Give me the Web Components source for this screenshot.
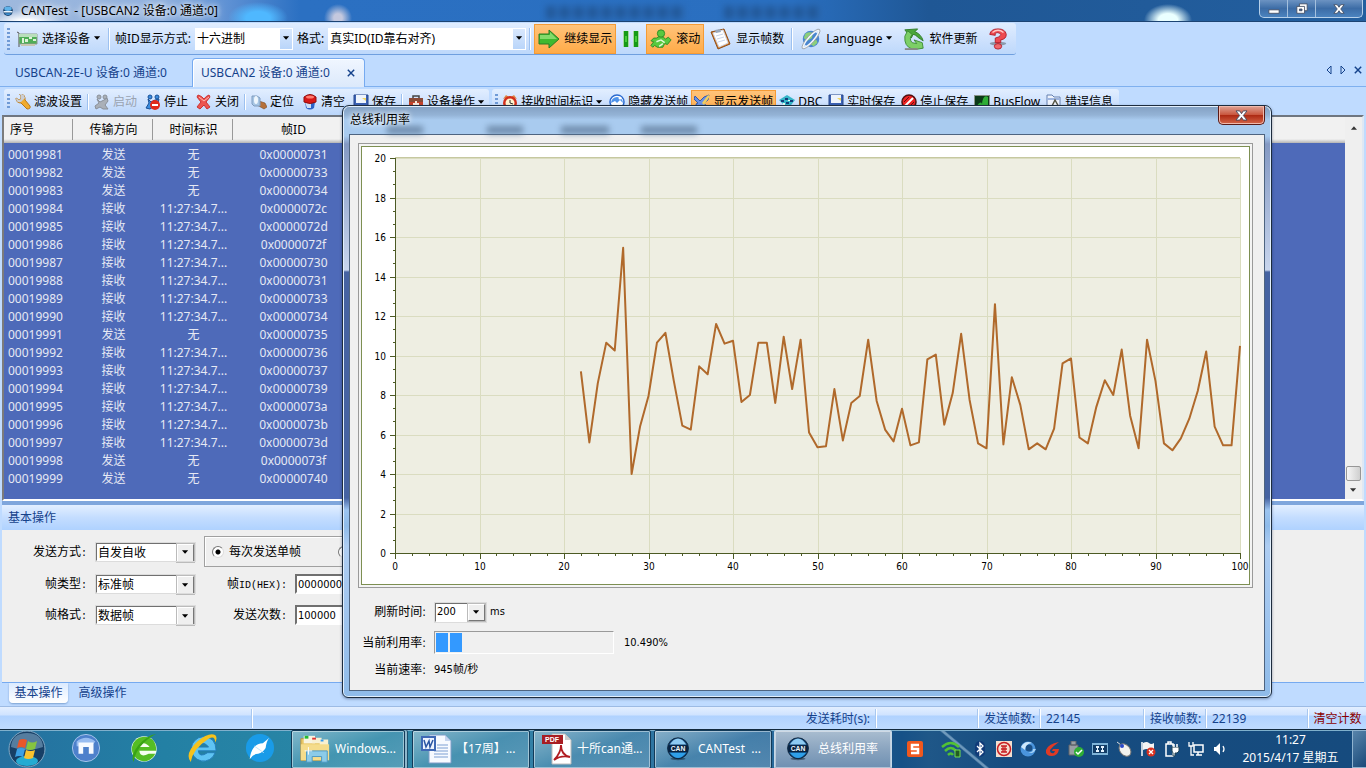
<!DOCTYPE html>
<html lang="zh-CN">
<head>
<meta charset="utf-8">
<title>CANTest</title>
<style>
html,body{margin:0;height:100%}
body{font:12px/18px "Noto Sans","Noto Sans CJK SC",sans-serif;color:#000;background:#bfdbff;overflow:hidden}
</style>
</head>
<body>
<desktop-screen></desktop-screen>
<script>
const ICONS = {
  app: ['0 0 16 16', '<circle cx="8" cy="8" r="6.500" fill="#173e68"/><ellipse cx="8" cy="5" rx="5" ry="3" fill="#5fb3ea"/><path d="M2 8h12v2H2z" fill="#e8f4ff"/><path d="M3 11h10q-5 5-10 0z" fill="#3d8fd0"/>'],
  card: ['0 0 22 18', '<path d="M1 2l2 1v14" fill="none" stroke="#555"/><path d="M3 4h18v10H3z" fill="#4fae57" stroke="#8c9a8c"/><path d="M3 4h18v3H3z" fill="#b9dfba"/><path d="M6 8h2v5H6zM9 9h3v3H9zM13 7h3v2h-3zM17 9h3v2h-3z" fill="#dff2d8"/><path d="M5 14h14v2H5z" fill="#c8c6b0"/>'],
  go: ['0 0 22 20', '<path d="M1 5h10V1l10 9-10 9v-4H1z" fill="#3fb92f" stroke="#2b7d26"/><path d="M2 6h10V3l7 7H2z" fill="#9be57f" opacity=".75"/>'],
  pause: ['0 0 18 18', '<path d="M1 1h6v16H1zM11 1h6v16h-6z" fill="#a8d8a0"/><path d="M2 1h4v16H2zM12 1h4v16h-4z" fill="#169a16"/><path d="M3 6h2v6H3zM13 6h2v6h-2z" fill="#48c83c"/>'],
  roll: ['0 0 24 22', '<g fill="#58c93f" stroke="#2c8a24"><path d="M7 10Q12 6 17 11l3-2 3 3-4 5-3-1-2 4H8l-3-2-2 2-2-2 3-4-3-1 3-3z"/><circle cx="12" cy="5" r="4"/></g><path d="M7 14l5-2 4 3M10 19l4-3" fill="none" stroke="#e6fadd" stroke-width="1.500"/>'],
  note: ['0 0 22 22', '<path d="M1 4L14 1l6 15-12 5z" fill="#d5843a" stroke="#8e4d17"/><path d="M3 5l10-3 5 13-9 4z" fill="#fff" stroke="#cfd8e8"/><path d="M5 2l5-1 1 3-5 1z" fill="#9aa9bd"/><path d="M6 8l7-2M7 11l7-2M8 14l7-2" stroke="#c7d4ea"/>'],
  globe: ['0 0 24 24', '<circle cx="12" cy="12" r="9" fill="#4a86cf"/><path d="M6 6q5-3 8 0l-1 5-5 3-4-3zM13 14l5-1 1 3-4 4-3-2z" fill="#8ccf7a"/><ellipse cx="12" cy="12" rx="13" ry="3" fill="none" stroke="#f2f6fa" stroke-width="2" transform="rotate(-48 12 12)"/><ellipse cx="12" cy="12" rx="14" ry="4" fill="none" stroke="#8a939d" stroke-width=".8" transform="rotate(-48 12 12)"/>'],
  update: ['0 0 22 24', '<path d="M1 2l14-1-3 3q7 3 9 10l-6-4q-2-3-5-3l-2 4z" fill="#4aa63c" stroke="#2f7c27"/><path d="M1 9l3-6 5 4q-4 5 0 9l5 1-3-4 9 3 1 6-6 1H9Q0 20 1 9z" fill="#7ccf66" stroke="#3b8a32"/><path d="M1 23h14" stroke="#888" stroke-width="2"/>'],
  help: ['0 0 20 24', '<ellipse cx="10" cy="17" rx="9" ry="2" fill="#8b9aab"/><path d="M1 7Q2 1 10 1t9 6q0 5-6 6v3H7v-5q6-1 6-4-1-2-4-2T7 8z" fill="#ee4a50" stroke="#b11c28"/><ellipse cx="10" cy="20" rx="4" ry="3" fill="#f0696d" stroke="#b11c28"/><path d="M4 5q6-5 12 0" stroke="#ffc6c4" stroke-width="1.500" fill="none"/>'],
  wrench: ['0 0 16 16', '<path d="M1 4l3 2 2-1V2L4 0q5-1 6 4v2l5 6q1 3-3 3L6 9Q1 9 1 4z" fill="#f0ab2e" stroke="#b97717"/><path d="M1 4l3 2 2-1V2L4 0q5-1 6 4l-4 4Q1 9 1 4z" fill="#c9ced6"/>'],
  run: ['0 0 16 16', '<g fill="#aab0b8" stroke="#8a9099"><circle cx="5" cy="3" r="2"/><circle cx="11" cy="3" r="2"/><path d="M3 5l3 3 4-2 3-2 1 3-3 4 3 4H9l-3-2-4 2-1-3 4-3z"/></g>'],
  stop: ['0 0 16 16', '<g fill="#3a8de0" stroke="#174f96"><circle cx="5" cy="3" r="2"/><circle cx="12" cy="3" r="2"/><path d="M3 5l3 3 4-2 4-1-1 4-8 6-4-1 3-5z"/></g><circle cx="10" cy="11" r="5" fill="#e02a1a"/><path d="M7 10h6v2H7z" fill="#fff"/>'],
  close: ['0 0 16 16', '<path d="M2 1q4 1 6 4 2-3 5-4l1 2-4 5 4 5-3 2-3-4-4 4-3-2 4-5-4-5z" fill="#ec5450" stroke="#c33"/><path d="M3 3l5 4 5-4" stroke="#ffb7b0" fill="none"/>'],
  locate: ['0 0 16 16', '<path d="M8 7l6 2 2 4-3 2-7-4z" fill="#b5703a" stroke="#7c4a22" stroke-width=".6"/><path d="M1 2h5l3 2v8H3L1 10z" fill="#a8c6e4" stroke="#7f9cbf"/><ellipse cx="5" cy="6" rx="2" ry="4" fill="#eef6fd"/>'],
  clear: ['0 0 16 16', '<path d="M3 8h10l-1 6q-4 3-8 0z" fill="#2c62c8"/><path d="M3 8h6v6H5z" fill="#cfe0f8"/><path d="M2 3q6-5 12 0v5q-6 3-12 0z" fill="#d81818" stroke="#8f1010"/><ellipse cx="8" cy="3" rx="4" ry="1.500" fill="#ff7c70"/>'],
  save: ['0 0 16 16', '<path d="M1 1h14v14H3l-2-2z" fill="#3c62b4" stroke="#27468c"/><path d="M3 1h10v8H3z" fill="#eef4fc"/><path d="M4 11h8v4H4z" fill="#b8c6de"/><path d="M9 4h4v3z" fill="#f3d763"/>'],
  tools: ['0 0 16 16', '<path d="M5 4V2h6v2" fill="none" stroke="#444" stroke-width="1.500"/><path d="M1 4h14v11H1z" fill="#c4422a"/><path d="M1 4h14v4H1z" fill="#8a4a36"/><path d="M7 7h2v2h2v2H9v2H7v-2H5V9h2z" fill="#f8e6da"/>'],
  clock: ['0 0 16 16', '<path d="M1 5l3-4 3 2zM15 5l-3-4-3 2z" fill="#d84"/><circle cx="8" cy="9" r="7" fill="#d3301c"/><circle cx="8" cy="9" r="4.500" fill="#fff3cf"/><path d="M8 6v3l3 1" stroke="#333" fill="none"/>'],
  hide: ['0 0 16 16', '<circle cx="8" cy="8" r="7" fill="#fff" stroke="#2a6ad0" stroke-width="1.500"/><path d="M2 9a6 6 0 1 1 12 0l-3-3-3 3-2-2z" fill="#4f93ea"/><circle cx="11" cy="4" r="1.500" fill="#fff"/>'],
  show: ['0 0 16 16', '<path d="M1 2l5 5 4-4 5-2-1 5-4 3 4 5-2 1-5-4-4 3-1-4 2-1-4-4z" fill="#6a92e4" stroke="#3458ac"/><path d="M8 9l6-8 2 1-6 9z" fill="#f0cf62"/>'],
  dbc: ['0 0 16 16', '<path d="M0 6l8-5 8 5-7 9z" fill="#35b5c8"/><path d="M2 6h3v2H2zM6 4h3v2H6zM7 8h3v2H7zM11 6h3v2h-3zM8 12h3v1H8z" fill="#133c78"/><path d="M4 9h2v2H4zM9 6h2v1H9z" fill="#eaffef"/>'],
  nosave: ['0 0 16 16', '<circle cx="8" cy="8" r="7" fill="#e22" stroke="#501010" stroke-width="1.500"/><path d="M4 12l8-8" stroke="#fff" stroke-width="2"/><path d="M3 8l5-5M8 13l5-5" stroke="#611"/>'],
  flow: ['0 0 16 16', '<path d="M0 1h16v14H0z" fill="#8a948a"/><path d="M1 2h14v12H1z" fill="#0c3a18"/><path d="M2 13q5-7 6-3 1-10 6-7v10z" fill="#2fae35"/>'],
  error: ['0 0 16 16', '<path d="M1 1h5l2 2h6v12H1z" fill="#eef3fc" stroke="#6580b0"/><path d="M1 4h13v2H1z" fill="#9fb6e0"/><path d="M5 14l4-8 5 9M6 12h7" stroke="#554" stroke-width="1.500" fill="none"/>'],
  maxthon: ['0 0 32 32', '<circle cx="16" cy="16" r="14.500" fill="#4d80cb" stroke="#a9c6ec"/><path d="M6 9q10-8 20 0-4 7-20 5z" fill="#97bcf0"/><path d="M8 10h16v12h-5v-7h-6v7H8z" fill="#f6faff"/>'],
  green: ['0 0 32 32', '<circle cx="16" cy="17" r="13.500" fill="#f5fff0"/><path d="M16 4a13 13 0 1 0 12 18h-7q-9 5-10-3h18Q29 4 16 4zm-5 11q4-8 11 0z" fill="#55bd24"/><path d="M5 31Q1 24 10 13 20 2 29 1q-5 2-13 9Q6 20 5 31z" fill="#39a315"/>'],
  ie: ['0 0 32 32', '<path d="M17 4a13 13 0 1 0 13 17h-8q-9 6-10-2h19Q31 4 17 4zm-5 11q5-8 11 0z" fill="#5fc4f3" stroke="#247db8"/><path d="M4 31Q-3 22 11 9 23-1 30 2q3 3 0 8 0-8-7-4Q6 17 4 31z" fill="#f6c21c"/>'],
  bird: ['0 0 32 32', '<circle cx="16" cy="16" r="15" fill="#199be8"/><path d="M26 5q-3 3-4 11-3 5-8 6-5 0-9 6 1-8 4-12 4-5 10-5z" fill="#fff"/><path d="M10 14l10 7" stroke="#bfe4fb"/>'],
  folder: ['0 0 34 32', '<path d="M2 5h9l2 3h17v20H2z" fill="#e8c766" stroke="#ba9440"/><path d="M5 2h12v8H5z" fill="#f8f4e0"/><path d="M6 2h4v3H6z" fill="#2b3"/><path d="M14 4h10v6H14zM22 6h9v6h-9z" fill="#f8f0d0"/><path d="M14 4h4v2h-4z" fill="#d33"/><path d="M23 6h3v2h-3z" fill="#39e"/><path d="M2 11h30v17H2z" fill="#f5dc8b"/><path d="M8 30V18h22v12h-6v-6H14v6z" fill="#8ccbe8" stroke="#4a96c2"/><path d="M10 14v8M6 18h8" stroke="#fff"/>'],
  word: ['0 0 32 32', '<path d="M9 2h16l6 6v22H9z" fill="#f7faff" stroke="#7f9cc8"/><path d="M25 2v6h6z" fill="#c5d5ef"/><path d="M17 12h11M17 15h11M14 18h14M14 21h14M14 24h14" stroke="#7d9fd2"/><path d="M1 3h15v15H1z" fill="#3f69b5"/><path d="M3 5h11v11H3z" fill="#eef4ff"/><path d="M4 7l2 7 3-6 1 6 3-7" stroke="#2c57a4" stroke-width="1.500" fill="none"/>'],
  pdf: ['0 0 32 32', '<path d="M11 1h13l6 6v24H11z" fill="#fff" stroke="#bbb"/><path d="M24 1v6h6z" fill="#ccc"/><path d="M1 2h21v9H1z" fill="#a71d23"/><text x="4" y="9" font-family="Liberation Sans" font-size="7" font-weight="700" fill="#fff">PDF</text><path d="M13 27q7-7 7-15 0 10 9 12-9-2-16 3z" fill="none" stroke="#b01c20" stroke-width="1.800"/>'],
  can: ['0 0 32 32', '<ellipse cx="16" cy="29" rx="10" ry="2" fill="#123" opacity=".5"/><circle cx="16" cy="15" r="14" fill="#0d3e6e" stroke="#06192e"/><path d="M5 10Q10 2 16 2t11 8z" fill="#8ecbf3"/><path d="M5 21q11 14 22 0z" fill="#2f9fe8"/><path d="M3 11h26v9H3z" fill="#07213e"/><text x="16" y="19" text-anchor="middle" font-family="Liberation Sans" font-size="9" font-weight="700" fill="#eef8ff">CAN</text>'],
  sogou: ['0 0 16 16', '<rect width="16" height="16" rx="2" fill="#f0581e"/><path d="M12 4H5v4h6v4H4" stroke="#fff" stroke-width="2.500" fill="none"/>'],
  wifi: ['0 0 20 18', '<g fill="none" stroke="#52c234" stroke-width="2.500"><path d="M1 7q9-8 17 0M4 11q6-6 11 0M7 15q3-3 5 0"/></g><path d="M14 10h5v7h-5z" fill="#225c22" stroke="#72e04e"/>'],
  bt: ['0 0 16 16', '<rect x="3" width="10" height="16" rx="5" fill="#103a78"/><path d="M5 5l6 6-3 3V2l3 3-6 6" fill="none" stroke="#fff" stroke-width="1.300"/>'],
  icbc: ['0 0 16 16', '<path d="M0 0h16v16H0z" fill="#f3dfd0"/><circle cx="8" cy="8" r="6.500" fill="none" stroke="#c81e22" stroke-width="1.500"/><path d="M5 5h6M5 11h6M7 5v6M9 5v6M5 8h6" stroke="#c81e22" stroke-width="1.300"/>'],
  swirl: ['0 0 16 16', '<circle cx="8" cy="8" r="7.500" fill="#4a94dc"/><circle cx="9" cy="7" r="3.500" fill="#1a5088"/><path d="M1 6q4-7 11-4Q5 3 5 9z" fill="#cfe8fb"/><path d="M16 8q-3 6-8 3 5 1 5-3z" fill="#a8d4f6"/>'],
  gred: ['0 0 16 16', '<path d="M15 1Q9 5 6 9q0 4 4 3l1-2H8l1-2h6q-1 7-7 7-7 0-6-6 2-6 13-8z" fill="#e03a24"/>'],
  usb: ['0 0 16 16', '<path d="M3 0h5v4H3zM1 4h9v10H1z" fill="#9a9fa4" stroke="#5e6368"/><circle cx="11" cy="11" r="5" fill="#2fae35"/><path d="M8 11l2 2 4-4" stroke="#fff" stroke-width="1.500" fill="none"/>'],
  film: ['0 0 16 16', '<path d="M0 2h16v12H0z" fill="#7fb4d8"/><path d="M1 4h14v8H1z" fill="#123c66"/><path d="M4 5h3v2H6v2h1v2H4V9h1V7H4zM9 5h3v2h-1v2h1v2H9V9h1V7H9z" fill="#e6f4ff"/>'],
  mouse: ['0 0 16 16', '<path d="M1 1l4 3" stroke="#ddd"/><ellipse cx="9" cy="9" rx="5" ry="7" fill="#f2f2ee" stroke="#777" transform="rotate(-40 9 9)"/><circle cx="6" cy="5" r="2" fill="#2747c8"/>'],
  flag: ['0 0 16 16', '<path d="M2 1v14" stroke="#fff" stroke-width="1.500"/><path d="M3 2q4-2 6 0t5 0v7q-3 2-5 0t-6 0z" fill="#f4f4f4"/><circle cx="11" cy="11" r="4.500" fill="#d9301f"/><path d="M9 9l4 4M13 9l-4 4" stroke="#fff" stroke-width="1.300"/>'],
  plug: ['0 0 16 16', '<path d="M2 3h7v12H2zM4 1h3v2H4z" fill="none" stroke="#fff" stroke-width="1.500"/><path d="M8 6h7v4l-2 2h-2v3H9v-3L8 10z" fill="#fff" stroke="#245"/><path d="M10 3v3M13 3v3" stroke="#fff" stroke-width="1.500"/>'],
  net: ['0 0 16 16', '<path d="M6 4h9v7H6zM8 14h6M10 11v3" fill="none" stroke="#fff" stroke-width="1.500"/><path d="M1 1v4h4V1M3 5v9h3" fill="none" stroke="#fff" stroke-width="1.300"/>'],
  vol: ['0 0 16 16', '<path d="M2 6h2l4-4v12l-4-4H2z" fill="#fff"/><path d="M11 5q2 3 0 6" stroke="#fff" stroke-width="1.300" fill="none"/>'],
  caret: ['0 0 8 5', '<path d="M0 0h7L3.500 4z" fill="currentColor"/>'],
  x: ['0 0 10 10', '<path d="M1 1l8 8M9 1l-8 8" stroke="currentColor" stroke-width="1.800"/>'],
  prev: ['0 0 6 10', '<path d="M5 1v8L1 5z" fill="none" stroke="currentColor"/>'],
  next: ['0 0 6 10', '<path d="M1 1v8l4-4z" fill="none" stroke="currentColor"/>'],
  winx: ['0 0 14 12', '<path d="M1 1h4l2 3 2-3h4L9 6l4 5H9L7 8l-2 3H1l4-5z" fill="#fff" stroke="#444e63"/>'],
  min: ['0 0 14 12', '<path d="M1 7h12v4H1z" fill="#fff" stroke="#444e63"/>'],
  restore: ['0 0 14 12', '<path d="M4 0h9v8h-9z" fill="#fff" stroke="#444e63"/><path d="M1 3h9v8H1z" fill="#fff" stroke="#444e63"/><path d="M4 6h3v2H4z" fill="#39659c" stroke="#444e63"/>'],
  orb: ['0 0 38 38', '<circle cx="19" cy="19" r="18" fill="#173f66" stroke="#82a8c4"/><path d="M3 17Q4 3 19 3t16 14q-16 6-32 0z" fill="#7fa6c4" opacity=".6"/><ellipse cx="19" cy="31" rx="11" ry="5" fill="#29c7ee" opacity=".8"/><path d="M11 10q4-2 8 0l-2 8q-4-2-8 0z" fill="#e8562a"/><path d="M20 11q4 3 9 0l-2 8q-5 2-9 0z" fill="#85c440"/><path d="M9 19q4-2 8 0l-2 8q-4-2-8 0z" fill="#3c9fe4"/><path d="M18 20q5 2 9 0l-2 8q-5 2-9 0z" fill="#f9c22e"/>']
};

function define(name, css, html, setup) {
  customElements.define(name, class extends HTMLElement {
    constructor() {
      super();
      const root = this.attachShadow({mode: 'open'});
      root.innerHTML = `<style>*{box-sizing:border-box}${css}</style>`;
      this.markup = html;
    }
    connectedCallback() {
      if (this.ready) return;
      this.ready = true;
      const t = document.createElement('template');
      t.innerHTML = typeof this.markup === 'function' ? this.markup(this) : this.markup;
      this.shadowRoot.append(t.content.cloneNode(true));
      if (setup) setup(this, this.shadowRoot);
    }
  });
}

define('can-icon',
  ':host{display:inline-block;flex:none;width:16px;height:16px}svg{display:block;width:100%;height:100%}',
  el => { const [box, art] = ICONS[el.getAttribute('name')]; return `<svg viewBox="${box}" aria-hidden="true">${art}</svg>`; });

define('tool-grip',
  ':host{display:block;flex:none;width:3px;height:22px;background:repeating-linear-gradient(#6f9ad6 0 2px,transparent 2px 4px)}', '');

define('tool-sep',
  ':host{display:block;flex:none;width:2px;height:22px;margin:0 1px;border-left:1px solid #9dc1f0;border-right:1px solid #fff;box-sizing:border-box}', '');

define('tool-button', `
  :host{display:block;flex:none}
  button{display:flex;align-items:center;gap:var(--tool-gap,3px);height:100%;margin:0;padding:0 var(--tool-pad,3px);border:1px solid transparent;background:none;font:inherit;color:inherit;white-space:nowrap}
  :host([hot]) button{background:linear-gradient(#ffc37a,#ffab48);border-color:#f59b35}
  :host([disabled]) button{color:#9aa3b0}
  can-icon{width:var(--icon,16px);height:var(--icon,16px)}
  .caret{width:7px;height:5px}`,
  el => `<button type="button" ${el.hasAttribute('disabled') ? 'disabled' : ''} aria-label="${el.getAttribute('icon')}">
    <can-icon name="${el.getAttribute('icon')}"></can-icon><slot></slot>${el.hasAttribute('menu') ? '<can-icon class="caret" name="caret"></can-icon>' : ''}</button>`);

define('combo-box', `
  :host{display:block;flex:none;height:21px}
  div{display:grid;height:100%;background:#fff}
  select{grid-area:1/1;width:100%;height:100%;margin:0;border:0;padding:0 2px;appearance:none;background:none;font:inherit;color:#000;min-width:0;border-radius:0}
  span{grid-area:1/1;justify-self:end;pointer-events:none;display:grid;place-items:center;width:14px;background:linear-gradient(#d9e8fd,#b9d5fa);border:1px solid #fff}
  can-icon{width:7px;height:5px}
  :host([classic]) select{padding:0 1px}
  :host([classic]) div{border:2px solid;border-color:#707070 #fff #fff #707070;outline:1px solid #dcdcdc;outline-offset:-1px}
  :host([classic]) span{width:17px;background:#efefef;border:1px solid;border-color:#fff #777 #777 #fff;box-shadow:0 0 0 1px #bbb}`,
  el => `<div><select aria-label="${el.getAttribute('label')}"><option>${el.getAttribute('value')}</option></select><span><can-icon name="caret"></can-icon></span></div>`);

define('title-bar', `
  :host{display:flex;align-items:center;position:relative;height:22px;flex:none;overflow:hidden;border-bottom:1px solid #1c4473;
    background:radial-gradient(ellipse 24px 16px at 1168px 20px,#eaffff 40%,transparent),radial-gradient(ellipse 30px 16px at 258px 18px,#4fb8ff 40%,transparent),radial-gradient(ellipse 14px 14px at 338px 18px,#c4c8de 30%,transparent),radial-gradient(ellipse 40px 12px at 26px 22px,#fff 20%,transparent),linear-gradient(90deg,#9fb9dd 0,#8fb0de 12%,#5b8fd3 17%,#2b70c2 22%,#2a6fc0 58%,#1f5795 68%,#235f9f 100%)}
  h1{display:flex;align-items:center;gap:7px;margin:0 0 0 2px;font:inherit;font-size:12px;white-space:pre;text-shadow:0 0 5px #fff,0 0 8px #fff}
  can-icon{width:12px;height:14px}
  i{position:absolute;top:6px;height:13px;filter:blur(3px);background:repeating-linear-gradient(90deg,#1d4a80 0 9px,#2b66ad 9px 14px);opacity:.6}
  nav{display:flex;align-self:flex-start;margin-left:auto;margin-right:3px;height:18px;border:1px solid #b6d0ea;border-top:0;border-radius:0 0 5px 5px;background:linear-gradient(#6c93c2,#3c6ca6 50%,#4b83bf)}
  button{display:grid;place-items:center;width:28px;padding:0;border:0;border-right:1px solid #a4c0de;background:none}
  button:last-child{width:46px;border:0}
  nav can-icon{width:12px;height:12px}`,
  `<h1><can-icon name="app"></can-icon>CANTest  - [USBCAN2 设备:0 通道:0]</h1>
   <i style="left:40%;width:140px"></i><i style="left:53%;width:98px"></i>
   <nav><button type="button" aria-label="最小化"><can-icon name="min"></can-icon></button><button type="button" aria-label="还原"><can-icon name="restore"></can-icon></button><button type="button" aria-label="关闭"><can-icon name="winx"></can-icon></button></nav>`);

define('main-toolbar', `
  :host{display:flex;height:34px;flex:none;padding:1px 4px}
  .strip{display:flex;align-items:center;gap:2px;padding:0 3px;border-bottom:1px solid #6f9fdf;border-radius:3px;background:linear-gradient(#e0edff,#cfe2fd 50%,#bdd8fb);--icon:22px;--tool-gap:4px}
  tool-button{height:30px;--tool-pad:3px}
  combo-box{height:22px}
  .wide{width:198px}.mid{width:98px}
  label{white-space:nowrap;padding:0 2px}
  .tight{display:flex;align-items:center;gap:2px}
  .pause{--icon:18px}`,
  `<div class="strip"><tool-grip></tool-grip><tool-button icon="card" menu>选择设备</tool-button><tool-sep></tool-sep>
   <label>帧ID显示方式:</label><combo-box class="mid" label="帧ID显示方式" value="十六进制"></combo-box>
   <label>格式:</label><combo-box class="wide" label="格式" value="真实ID(ID靠右对齐)"></combo-box><tool-sep></tool-sep>
   <div class="tight"><tool-button icon="go" hot>继续显示</tool-button><tool-button class="pause" icon="pause"></tool-button><tool-button icon="roll" hot>滚动</tool-button><tool-button icon="note">显示帧数</tool-button></div><tool-sep></tool-sep>
   <tool-button icon="globe" menu>Language</tool-button><tool-button icon="update">软件更新</tool-button><tool-button icon="help"></tool-button></div>`);

define('tab-strip', `
  :host{display:flex;height:31px;flex:none;padding:2px 3px 0 2px;border-bottom:1px solid #7fb0ef;color:#15428b;align-items:stretch}
  button{font:inherit;color:inherit;border:1px solid transparent;border-bottom:0;background:none;margin:0;padding:0;text-align:left;white-space:nowrap}
  .off{width:190px;padding-left:12px}
  .on{display:flex;align-items:center;justify-content:space-between;width:173px;padding:0 9px 0 8px;margin-bottom:-1px;border-color:#76aaf0;border-radius:4px 4px 0 0;background:linear-gradient(#f0f6ff,#dce9fb);box-shadow:inset 1px 1px #fff}
  nav{display:flex;align-items:center;gap:6px;margin-left:auto;padding-bottom:6px}
  nav button{display:grid}
  can-icon{width:8px;height:8px}
  nav can-icon{width:6px;height:10px}
  nav .c{width:8px}`,
  `<button type="button" class="off">USBCAN-2E-U 设备:0 通道:0</button><button type="button" class="on">USBCAN2 设备:0 通道:0<can-icon name="x"></can-icon></button>
   <nav><button type="button" aria-label="上一个"><can-icon name="prev"></can-icon></button><button type="button" aria-label="下一个"><can-icon name="next"></can-icon></button><button type="button" aria-label="关闭"><can-icon class="c" name="x"></can-icon></button></nav>`);

define('frame-toolbar', `
  :host{display:flex;gap:3px;height:28px;flex:none;padding:2px 4px 0}
  div{display:flex;align-items:center;padding-left:3px;border-radius:3px;background:linear-gradient(#e2eeff,#cfe2fd 50%,#bad6fb)}
  .view{--tool-pad:2px;padding-right:3px}
  tool-grip{margin-right:1px;height:16px}
  tool-sep{height:16px}
  tool-button{height:24px}`,
  `<div><tool-grip></tool-grip><tool-button icon="wrench">滤波设置</tool-button><tool-sep></tool-sep><tool-button icon="run" disabled>启动</tool-button><tool-button icon="stop">停止</tool-button><tool-button icon="close">关闭</tool-button><tool-sep></tool-sep><tool-button icon="locate">定位</tool-button><tool-button icon="clear">清空</tool-button><tool-button icon="save">保存</tool-button><tool-sep></tool-sep><tool-button icon="tools" menu>设备操作</tool-button></div>
   <div class="view"><tool-grip></tool-grip><tool-button icon="clock" menu>接收时间标识</tool-button><tool-button icon="hide">隐藏发送帧</tool-button><tool-button icon="show" hot>显示发送帧</tool-button><tool-button icon="dbc">DBC</tool-button><tool-button icon="save">实时保存</tool-button><tool-button icon="nosave">停止保存</tool-button><tool-button icon="flow">BusFlow</tool-button><tool-button icon="error">错误信息</tool-button></div>`);

const IDS = ['731','733','734','72c','72d','72f','730','731','733','734','735','736','737','739','73a','73b','73d','73f','740'];
const SENT = new Set([0, 1, 2, 10, 17, 18]);
define('frame-table', `
  :host{display:flex;flex:1;min-height:0;margin:0 2px;border:2px solid;border-color:#6f7680 #dfe8f4 #fff #7c7c7c;background:#efefef}
  .grid{flex:1;min-width:0;overflow:hidden;background:#4e6ab9}
  table{width:100%;table-layout:fixed;border-collapse:separate;border-spacing:0;color:#e6e9f4;text-align:center}
  col.a{width:69px}col.b{width:80px}col.c{width:120px}
  th,td{padding:0 0 0 1px;font-weight:400;white-space:nowrap}
  th{height:26px;color:#000;background:linear-gradient(90deg,transparent calc(100% - 1px),#999 0) 0 2px/100% 21px no-repeat,linear-gradient(#f1f1f1 22px,#b4b4b4)}
  th:last-child{background:linear-gradient(#f1f1f1 22px,#b4b4b4)}
  th:first-child{text-align:left;padding-left:6px}
  td:first-child{text-align:left;padding-left:4px}
  tbody::before{content:"";display:block;height:3px}
  td{height:18px;line-height:18px}
  .bar{display:flex;flex-direction:column;align-items:center;width:17px;padding:8px 0 6px;color:#333}
  .bar can-icon{width:7px;height:5px}
  .up{transform:rotate(180deg)}
  .thumb{width:15px;height:15px;margin:auto 0 7px;border:1px solid #979797;border-radius:2px;background:linear-gradient(90deg,#f6f6f6,#cfcfcf)}`,
  () => `<div class="grid"><table><colgroup><col class="a"><col class="b"><col class="b"><col class="c"><col></colgroup>
   <thead><tr><th>序号</th><th>传输方向</th><th>时间标识</th><th>帧ID</th><th></th></tr></thead><tbody>${
   IDS.map((id, i) => `<tr><td>${'000' + (19981 + i)}</td><td>${SENT.has(i) ? '发送' : '接收'}</td><td>${SENT.has(i) ? '无' : '11:27:34.7...'}</td><td>0x00000${id}</td><td></td></tr>`).join('')
   }</tbody></table></div><div class="bar"><can-icon class="up" name="caret"></can-icon><div class="thumb"></div><can-icon name="caret"></can-icon></div>`);

define('send-panel', `
  :host{display:block;flex:none;margin:0 2px;border-top:4px solid #7fa6dc}
  h2{margin:0;height:25px;padding-left:6px;font:inherit;line-height:25px;color:#15428b;background:linear-gradient(#e3efff,#c4ddff 50%,#afd2ff)}
  form{display:grid;grid-template-columns:85px 101px 83px 1fr;grid-template-rows:23px 20px 20px;column-gap:8px;row-gap:11px;align-items:center;height:152px;padding-top:10px;background:#efefef;align-content:start;margin:0}
  label{text-align:right;white-space:nowrap}
  code{font:10px "Liberation Mono",monospace}
  combo-box{height:20px;width:101px}
  fieldset{grid-column:3/5;display:flex;align-items:center;gap:37px;width:420px;height:31px;margin:-4px 0;border:1px solid #a0a0a0;padding:0 7px;box-shadow:inset 1px 1px #fff}
  fieldset label{display:flex;align-items:center;gap:5px}
  input[type=radio]{width:12px;height:12px;margin:0;appearance:none;border-radius:50%;border:1px solid;border-color:#777 #ddd #ddd #777;background:#fff}
  input:checked{background:radial-gradient(#000 2px,#fff 3px)}
  input[type=text]{height:20px;width:150px;border:2px solid;border-color:#707070 #fff #fff #707070;padding:0 1px;font:11px "DejaVu Sans Condensed","DejaVu Sans",sans-serif;background:#fff}
  nav{display:flex;height:24px;padding-left:7px;border-top:1px solid #76aaf0;background:#bfdbff;color:#15428b}
  nav button{font:inherit;color:inherit;height:20px;width:59px;padding:0;margin:0 5px 0 0;border:0;background:none}
  nav .on{background:linear-gradient(#dcebff,#fff);border-radius:0 0 4px 4px;box-shadow:0 1px 2px #7ba0d0}`,
  `<h2>基本操作</h2>
   <form><label>发送方式<code>:</code></label><combo-box classic label="发送方式" value="自发自收"></combo-box>
   <fieldset><label><input type="radio" name="mode" checked>每次发送单帧</label><label><input type="radio" name="mode" aria-label="每次发送多帧"></label></fieldset>
   <label>帧类型<code>:</code></label><combo-box classic label="帧类型" value="标准帧"></combo-box><label for="id">帧<code>ID(HEX):</code></label><input type="text" id="id" value="00000000">
   <label>帧格式<code>:</code></label><combo-box classic label="帧格式" value="数据帧"></combo-box><label for="times">发送次数<code>:</code></label><input type="text" id="times" value="100000"></form>
   <nav><button type="button" class="on">基本操作</button><button type="button">高级操作</button></nav>`);

define('status-bar', `
  :host{display:grid;flex:none;grid-template-columns:253px 1fr 102px 62px 104px 62px 102px 57px;height:23px;border-top:1px solid #9dbbe4;color:#15428b;background:linear-gradient(#e3efff,#cfe3ff 8px,#b0d2ff 9px,#bddaff)}
  span{display:block;padding-left:5px;margin:2px 0;line-height:19px;border-right:1px solid #fff;box-shadow:inset -1px 0 #a9c8f0;white-space:nowrap}
  .r{text-align:right;padding-right:6px}
  button{font:inherit;color:#8b0000;border:0;background:none;padding:0;white-space:nowrap}`,
  `<span></span><span class="r">发送耗时(s):</span><span></span><span>发送帧数:</span><span>22145</span><span>接收帧数:</span><span>22139</span><button type="button">清空计数</button>`);

const LOAD = [9.2,5.6,8.6,10.65,10.25,15.45,4,6.4,7.95,10.65,11.15,8.7,6.45,6.25,9.45,9.05,11.6,10.6,10.75,7.65,8,10.65,10.65,7.6,10.95,8.3,10.8,6.1,5.35,5.4,8.3,5.7,7.6,7.95,10.8,7.7,6.25,5.65,7.3,5.45,5.6,9.8,10.05,6.5,8.1,11.1,7.75,5.55,5.3,12.6,5.5,8.9,7.5,5.25,5.55,5.25,6.3,9.6,9.85,5.85,5.55,7.4,8.75,8,10.3,6.95,5.3,10.8,8.7,5.55,5.2,5.8,6.8,8.2,10.2,6.4,5.45,5.45,10.49];
define('bus-chart', `
  :host{display:block;flex:1;min-height:0;border:1px solid #9a9a9a;padding:2px;background:#f4f4f4}
  div{height:100%;border:1px solid #7d8f52;background:#fff;overflow:hidden}
  svg{display:block;width:100%;height:100%;overflow:visible;font:10px "DejaVu Sans Condensed","DejaVu Sans",sans-serif}`,
  '<div><svg role="img" aria-label="总线利用率曲线"></svg></div>',
  (el, root) => {
    const svg = root.querySelector('svg'), box = root.querySelector('div');
    const draw = () => {
      const L = 33, T = 11, R = box.clientWidth - 9, B = box.clientHeight - 31;
      const X = v => L + (R - L) * v / 100, Y = v => B - (B - T) * v / 20;
      const p = n => Math.round(n) + .5;
      let grid = '', axis = `M${p(L)} ${T}V${B + 6}M${L - 5} ${p(B)}H${R + 1}`, text = '';
      for (let v = 0; v <= 100; v += 2) axis += `M${p(X(v))} ${B}v${v % 10 ? 3 : 6}`;
      for (let k = 0; k <= 30; k++) axis += `M${L} ${p(Y(k * 2 / 3))}h${k % 3 ? -2 : -5}`;
      for (let v = 0; v <= 100; v += 10) {
        if (v) grid += `M${p(X(v))} ${T}V${B}`;
        text += `<text x="${Math.round(X(v))}" y="${B + 17}" text-anchor="middle">${v}</text>`;
      }
      for (let v = 0; v <= 20; v += 2) {
        if (v) grid += `M${L} ${p(Y(v))}H${R}`;
        text += `<text x="${L - 9}" y="${Math.round(Y(v)) + 4}" text-anchor="end">${v}</text>`;
      }
      svg.innerHTML = `<rect x="${L}" y="${T - 1}" width="${R - L}" height="${B - T + 1}" fill="#eeeee2"/><path d="${grid}" fill="none" stroke="#dadcc0"/><path d="M${L} ${T - .5}H${R}" stroke="#c6c8a0"/><path d="${axis}" fill="none" stroke="#4c5a24"/>
        <polyline points="${LOAD.map((v, i) => X(22 + i) + ',' + Y(v)).join(' ')}" fill="none" stroke="#b0692b" stroke-width="2" stroke-linejoin="round"/>${text}`;
    };
    draw();
    new ResizeObserver(draw).observe(box);
  });

define('glass-dialog', `
  :host{position:absolute;left:342px;right:94px;top:105px;bottom:70px;display:flex;flex-direction:column;padding:0 6px 6px;border:1px solid #1d2c3e;border-radius:7px 7px 6px 6px;box-shadow:inset 0 0 0 1px #e2effc,0 1px 3px rgba(0,20,60,.4);box-sizing:border-box;overflow:hidden;
    background:linear-gradient(#829fc1 0,#94b3d6 9px,#a9cbef 14px,#a9cbef 30px,#8499c3 38px,#c8d5ed 164px,#4663a2 166px,#4663a2 392px,#9cc4f0 404px,#8fbbea 420px,#aecdf2 440px,#8fbbe9)}
  header{position:relative;display:flex;flex:none;height:28px;padding-left:1px}
  h2{margin:0;font:inherit;line-height:27px;text-shadow:0 0 5px #fff,0 0 7px #fff}
  i{position:absolute;top:20px;height:8px;background:#56718f;filter:blur(3px);opacity:.7}
  header button{display:grid;place-items:center;width:47px;height:19px;margin:0 0 0 auto;padding:0;border:1px solid #5b1b17;border-top:0;border-radius:0 0 5px 5px;background:linear-gradient(#e0a496,#c9573f 48%,#ad2a13 52%,#d4664a);box-shadow:inset 0 0 0 1px #f0b9ac}
  header can-icon{width:13px;height:11px}
  main{display:flex;flex-direction:column;flex:1;min-height:0;padding:8px 11px 12px 8px;border:1px solid #4e6480;background:#f0f0f0}
  .info{display:grid;grid-template-columns:68px auto;column-gap:8px;grid-template-rows:22px 23px 16px;row-gap:8px;justify-content:start;align-items:center;margin-top:13px;font:11px/16px "DejaVu Sans Condensed","Noto Sans CJK SC",sans-serif}
  label,b{font-size:12px;font-weight:400;text-align:right;white-space:nowrap}
  .r{display:flex;align-items:center;gap:3px}
  .r.w{gap:10px}
  combo-box{width:53px;height:21px}
  progress{appearance:none;display:block;width:180px;height:23px;border:1px solid;border-color:#9a9a9a #fff #fff #9a9a9a;background:#f0f0f0;padding:1px}
  progress::-webkit-progress-bar{background:#f0f0f0}
  progress::-webkit-progress-value{background:repeating-linear-gradient(90deg,#3399ff 0 12px,#f0f0f0 12px 14px)}`,
  `<header><h2>总线利用率</h2><i style="left:38px;width:36px"></i><i style="left:138px;width:36px"></i><i style="left:212px;width:48px"></i><i style="left:292px;width:56px"></i><button type="button" aria-label="关闭"><can-icon name="winx"></can-icon></button></header>
   <main><bus-chart></bus-chart><div class="info">
   <label>刷新时间:</label><div class="r"><combo-box classic label="刷新时间" value="200"></combo-box>ms</div>
   <label for="load">当前利用率:</label><div class="r w"><progress id="load" max="176" value="26"></progress><span>10.490%</span></div>
   <b>当前速率:</b><div>945帧/秒</div></div></main>`);

define('task-button', `
  :host{display:block;flex:none;width:118px;height:39px}
  button{display:flex;align-items:center;gap:4px;width:100%;height:100%;padding:0 0 0 7px;border:1px solid #123a58;border-radius:2px;box-shadow:inset 0 0 0 1px rgba(255,255,255,.45);background:linear-gradient(160deg,rgba(255,255,255,.42),rgba(255,255,255,.12) 50%,rgba(255,255,255,.2));font:inherit;color:#fff;white-space:pre;text-align:left}
  :host([stack]) button{width:114px;box-shadow:inset 0 0 0 1px rgba(255,255,255,.45),2px 0 0 #8fb8cc,3px 0 0 #1c4f6c}
  :host([active]) button{background:linear-gradient(#a9bdd0,#8aa4bf 50%,#6f90b2);border-color:#c5d8e8}
  can-icon{width:32px;height:32px}
  :host([small]) button{padding-left:11px;gap:8px}
  :host([small]) can-icon{width:24px;height:28px}`,
  el => `<button type="button"><can-icon name="${el.getAttribute('icon')}"></can-icon><slot></slot></button>`);

define('task-bar', `
  :host{display:flex;align-items:center;flex:none;height:39px;box-sizing:border-box;border-top:1px solid #11293f;box-shadow:inset 0 1px #7fb0cc;color:#fff;background:linear-gradient(40deg,transparent 47%,rgba(190,220,240,.5) 49%,rgba(190,220,240,.5) 51%,transparent 53%) 934px 0/60px 100% no-repeat,linear-gradient(90deg,#2570a0 0,#2380a4 12%,#2a87a6 26%,#337fa6 40%,#2b6d9e 55%,#165187 66%,#1f5788 68%,#164c80 74%,#164b7e 100%)}
  .start{display:grid;place-items:center;width:38px;height:38px;margin-left:8px;padding:0;border:0;background:none}
  .start can-icon{width:38px;height:38px}
  .pins{display:flex;gap:28px;margin-left:25px}
  .pins can-icon{width:30px;height:30px}
  .pins button{display:block;padding:0;border:0;background:none}
  .tasks{display:flex;gap:3px;margin-left:16px}
  .pair{display:flex;gap:2px}
  .tray{display:flex;align-items:center;gap:8px;margin-left:auto}
  .tray .s{margin-right:10px}
  .tray .wf{width:20px;height:18px;margin-right:3px}
  time{display:block;width:109px;margin:0 7px 0 8px;text-align:center;white-space:nowrap;line-height:18px}
  .desk{width:14px;height:38px;padding:0;border:1px solid #8fb3d0;border-right:0;background:linear-gradient(135deg,#5884ab,#1a4a79)}`,
  `<button class="start" type="button" aria-label="开始"><can-icon name="orb"></can-icon></button>
   <div class="pins">${['maxthon','green','ie','bird'].map(n => `<button type="button" aria-label="${n}"><can-icon name="${n}"></can-icon></button>`).join('')}</div>
   <div class="tasks"><task-button stack icon="folder">Windows...</task-button><task-button icon="word">【17周】...</task-button><task-button icon="pdf">十所can通...</task-button><div class="pair"><task-button small icon="can">CANTest  ...</task-button><task-button small active icon="can">总线利用率</task-button></div></div>
   <div class="tray"><can-icon class="s" name="sogou"></can-icon><can-icon class="wf" name="wifi"></can-icon>${['bt','icbc','swirl','gred','usb','film','mouse','flag','plug','net','vol'].map(n => `<can-icon name="${n}"></can-icon>`).join('')}</div>
   <time datetime="2015-04-17T11:27">11:27<br>2015/4/17 星期五</time><button class="desk" type="button" aria-label="显示桌面"></button>`);

define('desktop-screen', `
  :host{display:flex;flex-direction:column;position:relative;height:100vh;overflow:hidden;background:#bfdbff}
  .view{display:flex;flex-direction:column;flex:1;min-height:0}`,
  `<title-bar></title-bar><main-toolbar></main-toolbar><tab-strip></tab-strip>
   <div class="view"><frame-toolbar></frame-toolbar><frame-table></frame-table><send-panel></send-panel></div>
   <status-bar></status-bar><task-bar></task-bar><glass-dialog></glass-dialog>`);
</script>
</body>
</html>
